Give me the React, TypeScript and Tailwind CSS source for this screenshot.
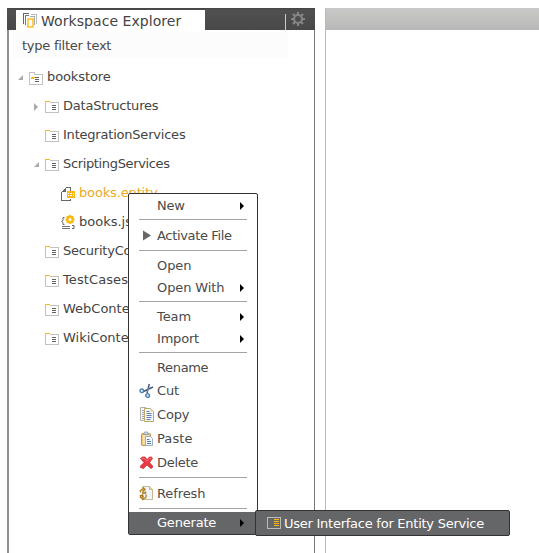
import React from "react";

const WorkspaceIcon = () => (
  <svg width="15" height="15" viewBox="0 0 15 15" fill="none" className="mt-[3px] shrink-0 self-start" shapeRendering="crispEdges">
    <path d="M0.5 11V0.5H6" stroke="#666" />
    <path d="M2.5 12V2.5H6" stroke="#777" />
    <path d="M8 1.5H13.5V11" stroke="#bbb" />
    <path d="M7 3.5H11.5V12" stroke="#aaa" />
    <rect x="5" y="6" width="5" height="8" stroke="#fdb913" strokeWidth="1.4" fill="#fff" shapeRendering="auto" />
  </svg>
);

const GearIcon = () => (
  <svg width="14" height="14" viewBox="0 0 14 14" fill="none" className="shrink-0">
    <circle cx="7" cy="7" r="4" stroke="#858585" strokeWidth="2.2" />
    <path d="M7 0v3M7 11v3M0 7h3M11 7h3M2 2l2 2M10 10l2 2M2 12l2-2M10 4l2-2" stroke="#858585" strokeWidth="2.2" />
  </svg>
);

const ProjectIcon = () => (
  <svg width="14" height="13" viewBox="0 0 14 13" fill="none" className="mt-[10px] shrink-0" shapeRendering="crispEdges">
    <path d="M0.5 12.5V0.5H5.5V2.5H13.5V12.5Z" stroke="#c2c2c2" fill="#fff" />
    <path d="M2 5h3v2H2z" fill="#fdb913" />
    <path d="M6 5.5h4M6 7.5h4M6 9.5h4" stroke="#606060" />
    <path d="M5 5.5h1" stroke="#fdb913" />
  </svg>
);

const FolderIcon = () => (
  <svg width="14" height="12" viewBox="0 0 14 12" fill="none" className="mt-[10px] shrink-0" shapeRendering="crispEdges">
    <path d="M0.5 1V11.5H13.5V1.5H5" stroke="#c2c2c2" />
    <path d="M0 0.5h5" stroke="#fdb913" />
    <path d="M7 4.5h4M7 6.5h4M7 8.5h4" stroke="#606060" />
  </svg>
);

const EntityIcon = () => (
  <svg width="15" height="14" viewBox="0 0 15 14" fill="none" className="mt-[9px] shrink-0" shapeRendering="crispEdges">
    <path d="M5 0.5H9.5V4M5 13.5H0.5V5M9.5 12V13.5H5" stroke="#666" />
    <path d="M0 5L5 0V5Z" fill="#666" />
    <path d="M6 4h8v7H6z" fill="#fdb913" />
    <path d="M7 6h1v1H7zM9 6h2v1H9zM12 6h1v1h-1zM7 8h1v1H7zM9 8h2v1H9zM12 8h1v1h-1z" fill="#fff" />
  </svg>
);

const ScriptIcon = () => (
  <svg width="15" height="15" viewBox="0 0 15 15" fill="none" className="mt-[8px] shrink-0">
    <path d="M3.5 2.5H2V5.5L0.5 6.5L2 7.5V9.5H3.5M11 10.5h2v3h-2" stroke="#666" />
    <path d="M1 11.5h8M1 13.5h8" stroke="#777" />
    <circle cx="9" cy="4.5" r="2.7" stroke="#fdb913" strokeWidth="2.4" />
    <path d="M9 0v2M9 7v2M4.5 4.5h2M11.5 4.5h2M5.8 1.3l1.3 1.3M11 6.4l1.3 1.3M5.8 7.7l1.3-1.3M11 2.6l1.3-1.3" stroke="#fdb913" strokeWidth="1.8" />
  </svg>
);

const PlayIcon = () => (
  <svg width="16" height="16" viewBox="0 0 16 16" className="shrink-0">
    <path d="M4 2.5L12 7.5L4 12.5Z" fill="#666" />
  </svg>
);

const CutIcon = () => (
  <svg width="16" height="16" viewBox="0 0 16 16" fill="none" className="shrink-0">
    <path d="M10.3 1L8 10M14 4L4.5 8.5" stroke="#465b7b" strokeWidth="1.5" />
    <path d="M9.5 5L8.5 9" stroke="#93a6bd" strokeWidth="0.7" />
    <circle cx="2.8" cy="7.8" r="1.8" stroke="#4d83b6" strokeWidth="1.4" fill="#e4f2fa" />
    <circle cx="8.6" cy="12.5" r="1.9" stroke="#4d83b6" strokeWidth="1.4" fill="#c9e2f2" />
  </svg>
);

const CopyIcon = () => (
  <svg width="16" height="16" viewBox="0 0 16 16" fill="none" className="shrink-0">
    <path d="M1.5 0.5H7L9 2.5V13.5H1.5Z" fill="#f5f8fc" stroke="#b8b19a" />
    <path d="M3 3.5h3M3 5.5h3M3 7.5h3M3 9.5h3M3 11.5h3" stroke="#8da6c8" />
    <path d="M5.5 1.5H11.5L14.5 4.5V14.5H5.5Z" fill="#f4f8fd" stroke="#bba867" />
    <path d="M11.5 1.5V4.5H14.5Z" fill="#e3d28c" />
    <path d="M7.5 4.5h3M7.5 6.5h5M7.5 8.5h5M7.5 10.5h5M7.5 12.5h4" stroke="#607fae" />
  </svg>
);

const PasteIcon = () => (
  <svg width="16" height="16" viewBox="0 0 16 16" fill="none" className="shrink-0">
    <rect x="2.5" y="2.5" width="9" height="12" rx="1" fill="#f3c87d" stroke="#c09550" />
    <path d="M4 4h6v9H4z" fill="#f7dfb2" />
    <path d="M4.5 3.5L5.5 1H8.5L9.5 3.5Z" fill="#d1d8e1" stroke="#8794a6" strokeWidth="0.8" />
    <path d="M6.5 5.5H11.5L13.5 7.5V14.5H6.5Z" fill="#f5f9ff" stroke="#9baec8" />
    <path d="M8 8.5h2.5M8 10.5h4M8 12.5h4" stroke="#5d7da8" />
  </svg>
);

const DeleteIcon = () => (
  <svg width="16" height="16" viewBox="0 0 16 16" className="shrink-0">
    <path d="M1.5 3.5L3.5 2H6L8 4.5L10.5 2H12.5L13.5 3.5L10.5 7.5L13.5 11V12.5L12 13.5L7.8 10L4.5 13.5L1.5 12.5V11L5 7.5Z" fill="#e83b45" stroke="#c82838" strokeWidth="0.8" />
    <path d="M2.5 3.8L5 3L7.8 6L11 3L12.5 3.6" fill="none" stroke="#f17475" />
  </svg>
);

const RefreshIcon = () => (
  <svg width="16" height="16" viewBox="0 0 16 16" fill="none" className="shrink-0">
    <path d="M3.5 0.5H10.5L13.5 3.5V13.5H3.5Z" fill="#f0f5fd" stroke="#c5b98f" />
    <path d="M10.5 0.5V3.5H13.5" fill="#ead69b" stroke="#c5b98f" />
    <path d="M1.5 6.5V4.5L3 3.5H5.5M4 1.5L6 3.5L4 5.5M3 7H6.5V5.5M1.5 12V9.5H4.5M7 8.5V11L6 12H3M4.5 10L2.5 12L4.5 14" stroke="#a9781f" strokeWidth="1.4" />
    <path d="M2 5.5L3.5 3.8H5.5M6.5 9.5V11L5 11.8H3" stroke="#efc35c" strokeWidth="0.7" />
  </svg>
);

const InterfaceIcon = () => (
  <svg width="14" height="12" viewBox="0 0 14 12" fill="none" className="shrink-0" shapeRendering="crispEdges">
    <rect x="0.5" y="0.5" width="13" height="11" stroke="#bbb" />
    <path d="M7 2.5h5M7 4.5h5M7 6.5h5M7 8.5h5" stroke="#fdb913" />
  </svg>
);

const Twisty = ({ open }: { open: boolean }) => (
  <svg width="6" height="8" viewBox="0 0 6 8" className="mt-[12px] shrink-0">
    <path d={open ? "M5 1V6H0Z" : "M0 0V8L4 4Z"} fill="#aaa" />
  </svg>
);

const Arrow = () => (
  <svg width="4" height="8" viewBox="0 0 4 8" className="mr-[13px] shrink-0">
    <path d="M0 0L4 4L0 8Z" fill="#000" />
  </svg>
);

type TreeRowProps = {
  label: string;
  pad: string;
  icon: React.ReactNode;
  open?: boolean;
  tone?: string;
};

const TreeRow = ({ label, pad, icon, open, tone = "tracking-[-0.21px]" }: TreeRowProps) => (
  <div className={`flex h-[29px] items-start ${pad}`}>
    <span className="flex w-[11px] shrink-0">{open !== undefined && <Twisty open={open} />}</span>
    <span className="flex w-[18px] shrink-0">{icon}</span>
    <span className={`mt-[6px] ${tone}`}>{label}</span>
  </div>
);

type ItemProps = {
  label: string;
  icon?: React.ReactNode;
  arrow?: boolean;
  active?: boolean;
  tracking?: string;
};

const Item = ({ label, icon, arrow, active, tracking = "tracking-[-0.2px]" }: ItemProps) => (
  <div className={`flex items-center pl-[10px] ${icon ? "h-6" : "h-[22px]"} ${active ? "bg-[#656668] text-white" : ""}`}>
    <span className="flex w-[18px] shrink-0">{icon}</span>
    <span className={`flex-1 ${tracking}`}>{label}</span>
    {arrow && <Arrow />}
  </div>
);

const Sep = ({ last }: { last?: boolean }) => (
  <div className={`mx-[10px] mt-[2px] h-px bg-[#a3a3a3] ${last ? "mb-[3px]" : "mb-1"}`} />
);

export default function App() {
  return (
    <div className="relative flex h-[553px] w-[539px] overflow-hidden whitespace-nowrap bg-white pt-2 font-['Verdana','DejaVu_Sans',sans-serif] text-[13px] leading-[18px] text-[#4a4a4a]">
      <aside className="ml-[7px] flex w-[308px] shrink-0 flex-col border-l-2 border-r border-l-[#909090] border-r-[#777]">
        <header className="-ml-[2px] -mr-px flex h-[22px] bg-linear-to-b from-[#444] via-[#505050] via-10% to-[#484848]">
          <div className="ml-[9px] mt-[2px] flex h-5 w-[189px] items-center bg-white pl-[7px] text-[14px] text-[#444]">
            <WorkspaceIcon />
            <span className="ml-[3px] mt-[2px] tracking-[0.06px]">Workspace Explorer</span>
          </div>
          <div className="ml-[80px] mt-[6px] h-4 w-px bg-[#ccc]" />
          <div className="ml-[5px] mt-1"><GearIcon /></div>
        </header>
        <div className="ml-[3px] mt-[2px] flex h-[26px] w-[276px] items-center bg-[#fcfcfc] pl-[10px] pt-[2px] tracking-[-0.25px]">type filter text</div>
        <nav className="mt-[4px] text-[#444]">
          <TreeRow label="bookstore" pad="pl-[9px]" icon={<ProjectIcon />} open tone="tracking-[-0.1px]" />
          <TreeRow label="DataStructures" pad="pl-[25px]" icon={<FolderIcon />} open={false} />
          <TreeRow label="IntegrationServices" pad="pl-[25px]" icon={<FolderIcon />} />
          <TreeRow label="ScriptingServices" pad="pl-[25px]" icon={<FolderIcon />} open tone="tracking-[-0.35px]" />
          <TreeRow label="books.entity" pad="pl-[41px]" icon={<EntityIcon />} tone="tracking-[-0.15px] text-[#eda91f]" />
          <TreeRow label="books.js" pad="pl-[41px]" icon={<ScriptIcon />} tone="tracking-normal" />
          <TreeRow label="SecurityConstraints" pad="pl-[25px]" icon={<FolderIcon />} />
          <TreeRow label="TestCases" pad="pl-[25px]" icon={<FolderIcon />} tone="tracking-[0.1px]" />
          <TreeRow label="WebContent" pad="pl-[25px]" icon={<FolderIcon />} tone="tracking-normal" />
          <TreeRow label="WikiContent" pad="pl-[25px]" icon={<FolderIcon />} tone="tracking-normal" />
        </nav>
      </aside>
      <main className="ml-[10px] flex-1 border-l border-[#b8bcc2]">
        <div className="h-[22px] border-t border-[#c5c8cc] bg-linear-to-b from-[#c8c8c6] to-[#b8b8b8]" />
      </main>
      <div className="absolute left-[128px] top-[193px] h-[342px] w-[130px] rounded-[2px] border border-[#333] bg-white pt-px">
        <Item label="New" arrow />
        <Sep />
        <Item label="Activate File" icon={<PlayIcon />} tracking="tracking-[-0.34px]" />
        <Sep />
        <Item label="Open" tracking="tracking-[-0.1px]" />
        <Item label="Open With" arrow tracking="tracking-[-0.1px]" />
        <Sep />
        <Item label="Team" arrow tracking="tracking-[-0.1px]" />
        <Item label="Import" arrow />
        <Sep />
        <Item label="Rename" tracking="tracking-[-0.35px]" />
        <Item label="Cut" icon={<CutIcon />} tracking="tracking-[-0.1px]" />
        <Item label="Copy" icon={<CopyIcon />} tracking="tracking-[-0.2px]" />
        <Item label="Paste" icon={<PasteIcon />} tracking="tracking-[0.1px]" />
        <Item label="Delete" icon={<DeleteIcon />} tracking="tracking-[-0.3px]" />
        <Sep />
        <Item label="Refresh" icon={<RefreshIcon />} tracking="tracking-[-0.1px]" />
        <Sep last />
        <Item label="Generate" arrow active tracking="tracking-[-0.2px]" />
      </div>
      <div className="absolute left-[255px] top-[510px] flex h-[26px] w-[255px] items-center rounded-[2px] border border-[#333] bg-[#656668] pl-[11px] text-white">
        <InterfaceIcon />
        <span className="ml-[3px] mt-px tracking-[-0.25px]">User Interface for Entity Service</span>
      </div>
    </div>
  );
}
